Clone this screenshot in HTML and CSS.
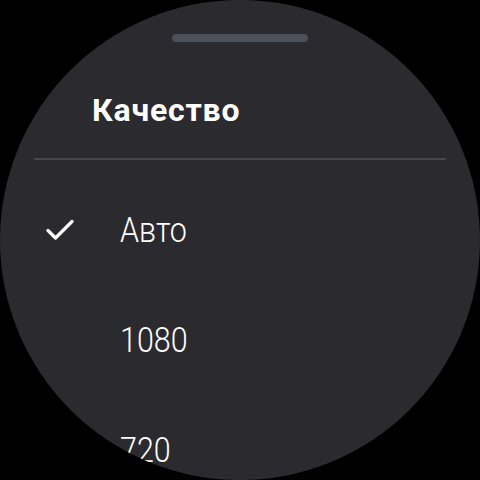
FILE: index.html
```html
<!DOCTYPE html>
<html lang="ru">
<head>
<meta charset="utf-8">
<link rel="stylesheet" href="styles.css">
</head>
<body>
<div class="watch">
  <div class="handle"></div>
  <h1 class="title">Качество</h1>
  <div class="divider"></div>
  <ul class="list">
    <li class="item">
      <span class="check">
        <svg width="28" height="22" viewBox="0 0 28 22"><path d="M2 11.5 L9.5 19 L26 2.5" fill="none" stroke="#fff" stroke-width="3.2" stroke-linecap="round" stroke-linejoin="round"/></svg>
      </span>
      <span class="label">Авто</span>
    </li>
    <li class="item"><span class="check"></span><span class="label">1080</span></li>
    <li class="item"><span class="check"></span><span class="label">720</span></li>
  </ul>
</div>
</body>
</html>
```
FILE: styles.css
```css
html, body {
  margin: 0;
  padding: 0;
  background: #000;
}
.watch {
  width: 480px;
  height: 480px;
  border-radius: 50%;
  overflow: hidden;
  background: #2b2a2f;
  display: flex;
  flex-direction: column;
  align-items: center;
  font-family: Roboto, "Noto Sans", sans-serif;
  color: #fff;
}
.handle {
  margin-top: 34px;
  width: 136px;
  height: 8px;
  border-radius: 4px;
  background: #4b5158;
  flex-shrink: 0;
}
.title {
  align-self: flex-start;
  margin: 50px 0 0 92px;
  font-size: 32px;
  font-weight: 700;
  letter-spacing: 0.8px;
  line-height: 36px;
}
.divider {
  margin-top: 30px;
  width: 412px;
  height: 2px;
  background: #46494e;
  flex-shrink: 0;
}
.list {
  list-style: none;
  margin: 0;
  padding: 0;
  align-self: stretch;
}
.item {
  height: 110px;
  display: flex;
  align-items: center;
  padding-left: 46px;
}
.item:first-child {
  margin-top: 15px;
}
.check {
  width: 74px;
  display: flex;
  align-items: center;
}
.label {
  font-size: 35px;
  font-weight: 300;
  display: inline-block;
  transform: scaleX(0.87);
  transform-origin: left center;
}
```
